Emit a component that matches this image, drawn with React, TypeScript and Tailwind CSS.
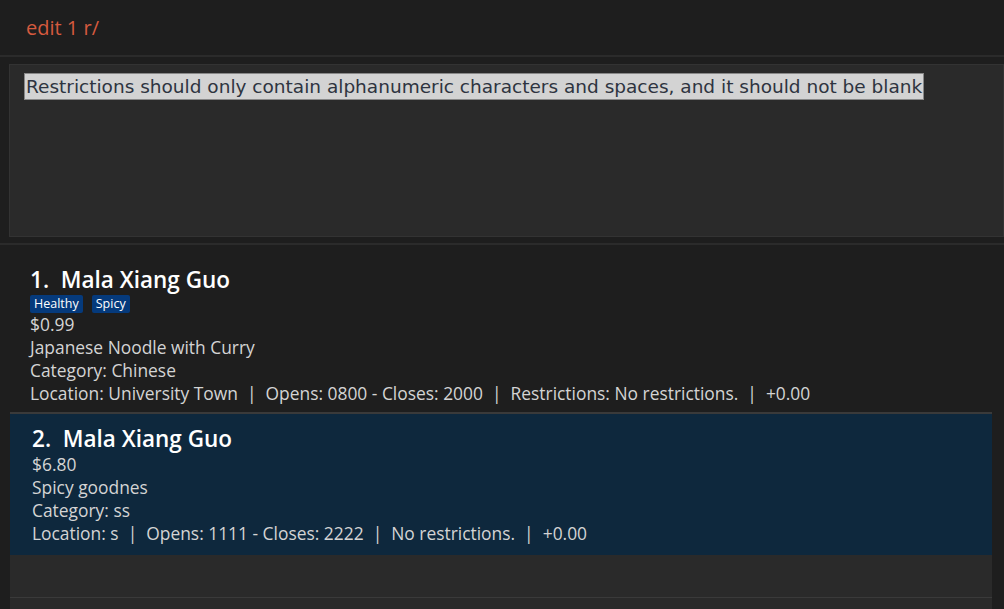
import React from "react";

type Item = {
  index: number;
  name: string;
  tags: string[];
  price: string;
  desc: string;
  category: string;
  details: string;
  selected?: boolean;
};

const items: Item[] = [
  {
    index: 1,
    name: "Mala Xiang Guo",
    tags: ["Healthy", "Spicy"],
    price: "$0.99",
    desc: "Japanese Noodle with Curry",
    category: "Chinese",
    details:
      "Location: University Town  |  Opens: 0800 - Closes: 2000  |  Restrictions: No restrictions.  |  +0.00",
  },
  {
    index: 2,
    name: "Mala Xiang Guo",
    tags: [],
    price: "$6.80",
    desc: "Spicy goodnes",
    category: "ss",
    details: "Location: s  |  Opens: 1111 - Closes: 2222  |  No restrictions.  |  +0.00",
    selected: true,
  },
];

function FoodCard({ item }: { item: Item }) {
  return (
    <div
      className={
        item.selected
          ? "bg-[#0e283d] border-t-2 border-[#3a3a3a] pl-[22px] pt-[12px] h-[143px]"
          : "bg-[#1e1e1e] pl-[20px] pt-[19px] h-[164px]"
      }
    >
      <div className="text-[22.5px] leading-[26px] text-white font-semibold whitespace-pre">
        {item.index}.  {item.name}
      </div>
      {item.tags.length > 0 && (
        <div className="flex gap-[9px] mt-[2px]">
          {item.tags.map((t) => (
            <span
              key={t}
              className="bg-[#053a7c] text-white text-[12.5px] leading-[18px] px-[4px] rounded-[2px]"
            >
              {t}
            </span>
          ))}
        </div>
      )}
      <div
        className={
          "text-[17.4px] leading-[23px] text-[#d4d4d4] whitespace-pre " +
          (item.selected ? "mt-[1px]" : "")
        }
      >
        <div>{item.price}</div>
        <div>{item.desc}</div>
        <div>Category: {item.category}</div>
        <div>{item.details}</div>
      </div>
    </div>
  );
}

export default function App() {
  return (
    <div
      className="w-[1004px] h-[609px] bg-[#1e1e1e] flex flex-col overflow-hidden"
      style={{ fontFamily: "'Open Sans', Roboto, sans-serif" }}
    >
      <div className="h-[55px] flex items-center pl-[26px] pt-[1px]">
        <span className="text-[#d55a3e] text-[20px]">edit 1 r/</span>
      </div>
      <div className="h-[2px] bg-[#2b2b2b]" />
      <div className="h-[7px]" />
      <div className="ml-[9px] h-[173px] bg-[#2a2a2a] border border-[#333] pl-[14px] pt-[8px]">
        <span
          className="bg-[#d3d3d3] text-[#2e3440] text-[18.5px] leading-[25px] px-[1px] border border-[#888] inline-block"
          style={{ fontFamily: "'DejaVu Sans', sans-serif" }}
        >
          Restrictions should only contain alphanumeric characters and spaces, and it should not be blank
        </span>
      </div>
      <div className="h-[6px]" />
      <div className="h-[2px] bg-[#2b2b2b]" />
      <div className="flex flex-1">
        <div className="ml-[10px] w-[982px] flex flex-col">
          <div className="h-[3px]" />
          {items.map((it) => (
            <FoodCard key={it.index} item={it} />
          ))}
          <div className="h-[43px] bg-[#2a2a2a] border-b border-[#3a3a3a]" />
          <div className="flex-1 bg-[#2a2a2a]" />
        </div>
      </div>
    </div>
  );
}
